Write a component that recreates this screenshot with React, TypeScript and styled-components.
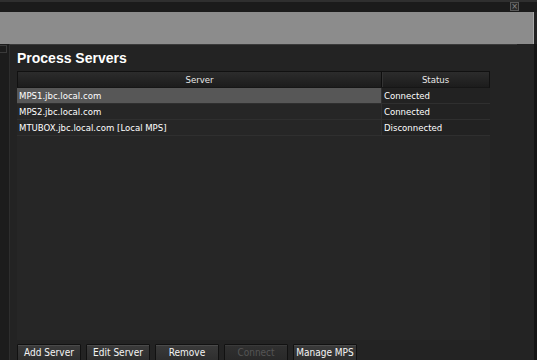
import styled, { createGlobalStyle } from "styled-components";

const GlobalStyle = createGlobalStyle`
	html, body {
		margin: 0;
		padding: 0;
		background: #222222;
	}
	body {
		font-family: "DejaVu Sans Condensed", "Liberation Sans", Arial, sans-serif;
		color: #f0f0f0;
	}
`;

const Window = styled.div`
	width: 537px;
	height: 360px;
	overflow: hidden;
	display: flex;
	flex-direction: column;
	background: #222222;
`;

const TitleStrip = styled.div`
	height: 12px;
	box-sizing: border-box;
	border-top: 2px solid #2f2f2f;
	background: #1b1b1b;
	display: flex;
	justify-content: flex-end;
	align-items: flex-start;
	padding-right: 18px;
`;

const CloseBox = styled.div`
	width: 9px;
	height: 9px;
	box-sizing: border-box;
	border: 1px solid #5a5a5a;
	background: #2a2a2a;
	color: #8a8a8a;
	font-size: 8px;
	line-height: 7px;
	text-align: center;
	font-family: "DejaVu Sans", sans-serif;
`;

const GrayBand = styled.div`
	height: 32px;
	margin-right: 3px;
	background: #8c8c8c;
	border-right: 1px solid #a8a8a8;
`;

const Body = styled.div`
	flex: 1;
	display: flex;
	min-height: 0;
`;

const Gutter = styled.div`
	width: 9px;
	background: #1c1c1c;
	border-right: 1px solid #2e2e2e;
	padding-top: 1px;
`;

const GutterTab = styled.div`
	width: 6px;
	height: 6px;
	border: 1px solid #3a3a3a;
	border-left: none;
`;

const Content = styled.div`
	flex: 1;
	display: flex;
	flex-direction: column;
	background: #232323;
	border-right: 3px solid #151515;
	position: relative;
`;

const TopRule = styled.div`
	height: 2px;
	margin-right: 17px;
	background: #9a9a9a;
	border-bottom: 1px solid #3a3a3a;
`;

const Inner = styled.div`
	flex: 1;
	display: flex;
	flex-direction: column;
	padding: 4px 0 0 7px;
`;

const Title = styled.h1`
	margin: 0;
	font-family: "Liberation Sans", Arial, sans-serif;
	font-weight: bold;
	font-size: 14px;
	line-height: 18px;
	color: #ffffff;
	height: 22px;
`;

const TablePanel = styled.div`
	width: 473px;
	height: 269px;
	background: #262626;
	display: flex;
	flex-direction: column;
`;

const Row = styled.div`
	display: grid;
	grid-template-columns: 364px 109px;
	height: 15px;
	border-bottom: 1px solid #2f2f2f;
	font-size: 9.5px;
	line-height: 15px;
`;

const HeaderRow = styled(Row)`
	height: 15px;
	border: 1px solid #111111;
	border-bottom: 1px solid #161616;
	background: linear-gradient(#2c2c2c, #1c1c1c);
	box-sizing: content-box;
	grid-template-columns: 363px 108px;
`;

const HeaderCell = styled.div`
	text-align: center;
	color: #e8e8e8;
	& + & {
		border-left: 1px solid #0e0e0e;
		box-shadow: inset 1px 0 0 #333;
	}
`;

const Cell = styled.div<{ $selected?: boolean }>`
	padding-left: 2px;
	background: ${({ $selected }) => ($selected ? "#575757" : "transparent")};
	color: #ffffff;
	white-space: nowrap;
	& + & {
		border-left: 1px solid #2f2f2f;
		background: #222222;
	}
`;

const Buttons = styled.div`
	display: flex;
	gap: 5px;
	margin-top: 4px;
`;

const Button = styled.button`
	width: 64px;
	height: 20px;
	padding: 0 0 3px;
	border: 1px solid #111111;
	border-radius: 1px;
	background: linear-gradient(#3a3a3a, #2c2c2c);
	box-shadow: inset 0 1px 0 #4a4a4a;
	color: #f4f4f4;
	font-family: "DejaVu Sans Condensed", "Liberation Sans", Arial, sans-serif;
	font-size: 10px;
	&:disabled {
		color: #555555;
		background: linear-gradient(#303030, #272727);
		box-shadow: inset 0 1px 0 #3a3a3a;
	}
`;

const servers = [
	{ name: "MPS1.jbc.local.com", status: "Connected", selected: true },
	{ name: "MPS2.jbc.local.com", status: "Connected" },
	{ name: "MTUBOX.jbc.local.com [Local MPS]", status: "Disconnected" },
];

export default function App() {
	return (
		<>
			<GlobalStyle />
			<Window>
				<TitleStrip>
					<CloseBox>×</CloseBox>
				</TitleStrip>
				<GrayBand />
				<Body>
					<Gutter>
						<GutterTab />
					</Gutter>
					<Content>
						<TopRule />
						<Inner>
							<Title>Process Servers</Title>
							<TablePanel>
								<HeaderRow>
									<HeaderCell>Server</HeaderCell>
									<HeaderCell>Status</HeaderCell>
								</HeaderRow>
								{servers.map((s) => (
									<Row key={s.name}>
										<Cell $selected={s.selected}>{s.name}</Cell>
										<Cell>{s.status}</Cell>
									</Row>
								))}
							</TablePanel>
							<Buttons>
								<Button>Add Server</Button>
								<Button>Edit Server</Button>
								<Button>Remove</Button>
								<Button disabled>Connect</Button>
								<Button>Manage MPS</Button>
							</Buttons>
						</Inner>
					</Content>
				</Body>
			</Window>
		</>
	);
}
